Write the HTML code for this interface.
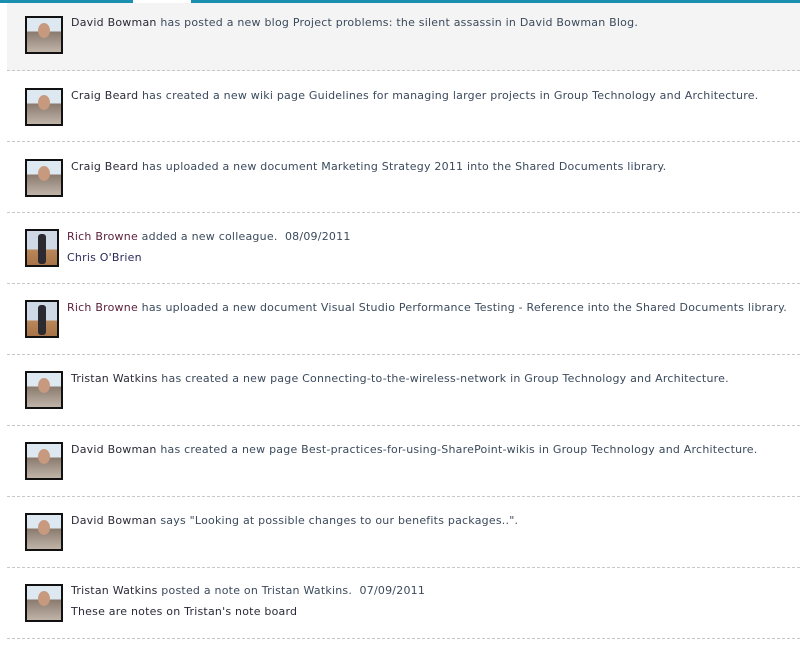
<!DOCTYPE html>
<html><head><style>
body{margin:0;width:800px;height:651px;background:#fff;position:relative;overflow:hidden;font-family:"DejaVu Sans","Liberation Sans",sans-serif;font-size:11px;letter-spacing:0.22px;color:#3b4a5c}
.bar{position:absolute;top:0;height:3px;background:#1a8fb0}
.row{position:absolute;left:7px;width:793px;height:70px;border-bottom:1px dashed #c8c8c8}
.av{position:absolute;left:18px;top:15px;width:34px;height:34px;border:2px solid #111;background:linear-gradient(#dde8f0 0,#dde8f0 40%,#8a7a6e 40%,#c0b4a8 100%)}
.av.r{width:30px;background:linear-gradient(#cfd9e6 0,#cfd9e6 55%,#b8875a 55%,#a87448 100%)}
.av i{position:absolute;left:11px;top:5px;width:12px;height:15px;border-radius:50%;background:#c79a80}
.av.r i{left:11px;width:8px;height:30px;border-radius:3px;background:#2a2a30;top:3px}
.t{position:absolute;left:64px;top:14px;white-space:nowrap}
.t.r{left:60px}
.l2{position:absolute;left:60px;top:35px;white-space:nowrap}
.n{color:#2a2a38}
</style></head><body>
<div class="bar" style="left:0;width:133px"></div>
<div class="bar" style="left:191px;width:609px"></div>
<div class="row" style="top:3px;height:67px;background:#f4f4f4"><div class="av" style="top:13px"><i></i></div><div class="t" style="top:13px"><span class="n">David Bowman</span> has posted a new blog Project problems: the silent assassin in David Bowman Blog.</div></div>
<div class="row" style="top:71px"><div class="av" style="top:17px"><i></i></div><div class="t" style="top:18px"><span class="n">Craig Beard</span> has created a new wiki page Guidelines for managing larger projects in Group Technology and Architecture.</div></div>
<div class="row" style="top:142px"><div class="av" style="top:17px"><i></i></div><div class="t" style="top:18px"><span class="n">Craig Beard</span> has uploaded a new document Marketing Strategy 2011 into the Shared Documents library.</div></div>
<div class="row" style="top:213px"><div class="av r" style="top:16px"><i></i></div><div class="t r" style="top:17px"><span class="n" style="color:#5a1f3a">Rich Browne</span> added a new colleague.&nbsp; 08/09/2011</div><div class="l2" style="top:38px;color:#2a2a5a">Chris O'Brien</div></div>
<div class="row" style="top:284px"><div class="av r" style="top:16px"><i></i></div><div class="t r" style="top:17px"><span class="n" style="color:#5a1f3a">Rich Browne</span> has uploaded a new document Visual Studio Performance Testing - Reference into the Shared Documents library.</div></div>
<div class="row" style="top:355px"><div class="av" style="top:16px"><i></i></div><div class="t" style="top:17px"><span class="n">Tristan Watkins</span> has created a new page Connecting-to-the-wireless-network in Group Technology and Architecture.</div></div>
<div class="row" style="top:426px"><div class="av" style="top:16px"><i></i></div><div class="t" style="top:17px"><span class="n">David Bowman</span> has created a new page Best-practices-for-using-SharePoint-wikis in Group Technology and Architecture.</div></div>
<div class="row" style="top:497px"><div class="av" style="top:16px"><i></i></div><div class="t" style="top:17px"><span class="n">David Bowman</span> says "Looking at possible changes to our benefits packages..".</div></div>
<div class="row" style="top:568px"><div class="av" style="top:16px"><i></i></div><div class="t" style="top:16px"><span class="n">Tristan Watkins</span> posted a note on Tristan Watkins.&nbsp; 07/09/2011</div><div class="l2" style="left:64px;top:37px;color:#2a2a38">These are notes on Tristan's note board</div></div>
</body></html>
